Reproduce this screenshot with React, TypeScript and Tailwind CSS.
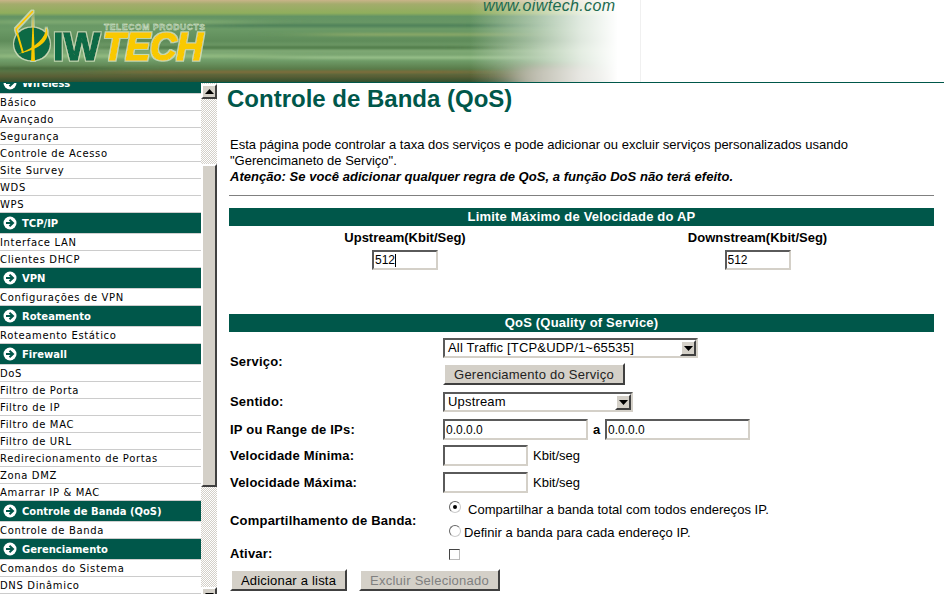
import type { ReactNode } from 'react';

const menu = [
  { title: 'Wireless', items: ['Básico', 'Avançado', 'Segurança', 'Controle de Acesso', 'Site Survey', 'WDS', 'WPS'] },
  { title: 'TCP/IP', items: ['Interface LAN', 'Clientes DHCP'] },
  { title: 'VPN', items: ['Configurações de VPN'] },
  { title: 'Roteamento', items: ['Roteamento Estático'] },
  {
    title: 'Firewall',
    items: ['DoS', 'Filtro de Porta', 'Filtro de IP', 'Filtro de MAC', 'Filtro de URL', 'Redirecionamento de Portas', 'Zona DMZ', 'Amarrar IP & MAC'],
  },
  { title: 'Controle de Banda (QoS)', items: ['Controle de Banda'] },
  { title: 'Gerenciamento', items: ['Comandos do Sistema', 'DNS Dinâmico'] },
];

const inset =
  'border-2 border-t-[#5a5a5a] border-l-[#5a5a5a] border-r-[#d4d0c8] border-b-[#d4d0c8] bg-white';
const raised =
  'bg-[#d4d0c8] border-2 border-t-white border-l-white border-r-[#404040] border-b-[#404040]';

function Banner() {
  return (
    <svg width="641" height="82" viewBox="0 0 641 82" className="block">
      <defs>
        <linearGradient id="bands" x1="0" y1="0" x2="0" y2="1">
          <stop offset="0" stopColor="#c9b489" />
          <stop offset="0.05" stopColor="#a3ac6c" />
          <stop offset="0.16" stopColor="#8fae5c" />
          <stop offset="0.2" stopColor="#649464" />
          <stop offset="0.36" stopColor="#6b9a66" />
          <stop offset="0.5" stopColor="#5f8c5a" />
          <stop offset="0.62" stopColor="#7ea874" />
          <stop offset="0.74" stopColor="#6f9c68" />
          <stop offset="0.84" stopColor="#5a7c4a" />
          <stop offset="0.93" stopColor="#5a5f36" />
          <stop offset="1" stopColor="#33502e" />
        </linearGradient>
        <linearGradient id="fade" x1="0" y1="0" x2="1" y2="0">
          <stop offset="0" stopColor="#fff" stopOpacity="0" />
          <stop offset="0.4" stopColor="#fff" stopOpacity="0.4" />
          <stop offset="0.75" stopColor="#fff" stopOpacity="0.8" />
          <stop offset="1" stopColor="#fff" stopOpacity="1" />
        </linearGradient>
        <filter id="streak" filterUnits="userSpaceOnUse" x="-150" y="-20" width="941" height="122">
          <feGaussianBlur stdDeviation="30 1" />
        </filter>
        <filter id="blob" filterUnits="userSpaceOnUse" x="400" y="40" width="241" height="60">
          <feGaussianBlur stdDeviation="12 3" />
        </filter>
        <filter id="glow" x="-10%" y="-10%" width="120%" height="120%">
          <feMorphology in="SourceAlpha" operator="dilate" radius="1" result="fat" />
          <feFlood floodColor="#d8e8c8" floodOpacity="0.75" />
          <feComposite in2="fat" operator="in" result="edge" />
          <feMerge>
            <feMergeNode in="edge" />
            <feMergeNode in="SourceGraphic" />
          </feMerge>
        </filter>
      </defs>
      <rect width="641" height="82" fill="url(#bands)" />
      <g filter="url(#streak)">
        <rect x="-20" y="20" width="260" height="4" fill="#7ba76f" />
        <rect x="200" y="24" width="320" height="3" fill="#4e8058" />
        <rect x="320" y="33" width="190" height="3" fill="#8aa868" />
        <rect x="100" y="46" width="400" height="3" fill="#507a48" />
        <rect x="-30" y="54" width="300" height="4" fill="#8fb87f" />
        <rect x="280" y="56" width="240" height="3" fill="#98c08a" />
        <rect x="120" y="71" width="360" height="2" fill="#8a6a38" />
        <rect x="-30" y="67" width="140" height="3" fill="#4a6a3c" />
      </g>
      <rect x="515" y="66" width="85" height="22" rx="10" fill="#8c8a72" filter="url(#blob)" />
      <rect x="470" y="0" width="148" height="82" fill="url(#fade)" />
      <rect x="617" y="0" width="24" height="82" fill="#fff" />
      <rect x="640" y="0" width="1" height="82" fill="#f0f0f0" />
      <text x="483" y="11" fontFamily="'Liberation Sans', sans-serif" fontStyle="italic" fontSize="16" fill="#1c6a50" textLength="132">
        www.oiwtech.com
      </text>

      {/* logo */}
      <g filter="url(#glow)">
        <ellipse cx="32" cy="44" rx="18" ry="16.5" fill="#0a6a45" />
        <path d="M33 11 L16 29 L23 53" fill="none" stroke="#f7c800" strokeWidth="2" />
        <path d="M33 10 L35 61 L31 61 Z" fill="#f7c800" />
        <path d="M46 27 C51 36 46 48 18 54 C36 47 46 38 46 27 Z" fill="#f7c800" />
        <text x="53" y="60" fontFamily="'Liberation Sans', sans-serif" fontWeight="700" fontSize="39" fill="#0a6a45" stroke="#0a6a45" strokeWidth="1.4" textLength="47" lengthAdjust="spacingAndGlyphs">
          IW
        </text>
        <text x="103" y="60" fontFamily="'Liberation Sans', sans-serif" fontWeight="700" fontStyle="italic" fontSize="39" fill="#f9c900" stroke="#f9c900" strokeWidth="1.4" textLength="100" lengthAdjust="spacingAndGlyphs">
          TECH
        </text>
      </g>
      <text x="104" y="29.5" fontFamily="'Liberation Sans', sans-serif" fontWeight="700" fontSize="8.5" fill="#7aa680" stroke="#e6efd8" strokeWidth="0.4" textLength="101">
        TELECOM PRODUCTS
      </text>
    </svg>
  );
}

function MenuArrow() {
  return (
    <svg width="14" height="14" viewBox="0 0 14 14" className="shrink-0">
      <circle cx="7" cy="7" r="6.5" fill="#fff" />
      <path d="M3 7 H9 M6.5 3.8 L10 7 L6.5 10.2" fill="none" stroke="#00574a" strokeWidth="2" />
    </svg>
  );
}

function Sidebar() {
  return (
    <div className="w-[201px] shrink-0 h-full overflow-hidden font-['DejaVu_Sans',Verdana,sans-serif]">
      <div className="-mt-[10px]">
        {menu.map((group) => (
          <div key={group.title}>
            <div className="h-[21px] bg-[#00574a] border-b border-[#d0d0d0] flex items-center gap-[5px] pl-[3px] text-white text-[10px] font-bold">
              <MenuArrow />
              <span>{group.title}</span>
            </div>
            {group.items.map((item) => (
              <div key={item} className="h-[17px] border-b border-[#cccccc] text-[10px] leading-[18px] tracking-[0.65px] text-black bg-white">
                {item}
              </div>
            ))}
          </div>
        ))}
      </div>
    </div>
  );
}

function Triangle({ down }: { down?: boolean }) {
  return (
    <svg width="9" height="5" viewBox="0 0 9 5">
      <path d={down ? 'M0 0 H9 L4.5 5 Z' : 'M0 5 H9 L4.5 0 Z'} fill="#000" />
    </svg>
  );
}

function ScrollBar() {
  return (
    <div className="w-[16px] shrink-0 h-full flex flex-col pt-px bg-[repeating-conic-gradient(#d4d0c8_0_25%,#ffffff_0_50%)] bg-[length:2px_2px]">
      <div className={`h-[15px] w-[16px] shrink-0 flex items-center justify-center ${raised}`}>
        <Triangle />
      </div>
      <div className={`h-[323px] w-[16px] mt-[65px] shrink-0 ${raised}`} />
      <div className={`h-[16px] w-[16px] mt-[100px] shrink-0 flex items-center justify-center ${raised}`}>
        <Triangle down />
      </div>
    </div>
  );
}

function TextBox({ value, className }: { value?: string; className: string }) {
  return (
    <input
      readOnly
      value={value ?? ''}
      className={`block ${inset} px-px text-[12px] text-black outline-none ${className}`}
    />
  );
}

function SelectBox({ value, className }: { value: string; className: string }) {
  return (
    <div className={`${inset} h-[20px] flex items-center justify-between pl-[3px] text-[13px] tracking-[0.18px] ${className}`}>
      <span>{value}</span>
      <div className={`h-[16px] w-[16px] flex items-center justify-center ${raised}`}>
        <Triangle down />
      </div>
    </div>
  );
}

function Band({ children, className }: { children: ReactNode; className: string }) {
  return (
    <div className={`h-[18px] bg-[#00574a] text-white text-[13px] font-bold leading-[18px] text-center tracking-[0.2px] ${className}`}>
      {children}
    </div>
  );
}

function Row({ label, className, children }: { label: string; className: string; children: ReactNode }) {
  return (
    <div className={`flex items-center ${className}`}>
      <div className="w-[214px] shrink-0 pl-px text-[13px] font-bold tracking-[0.2px]">{label}</div>
      <div className="flex-1">{children}</div>
    </div>
  );
}

function Radio({ checked, className }: { checked?: boolean; className: string }) {
  return (
    <span className={`w-[12px] h-[12px] shrink-0 rounded-full border border-t-[#666] border-l-[#666] border-r-[#ccc] border-b-[#ccc] bg-white flex items-center justify-center ${className}`}>
      {checked && <span className="w-[4px] h-[4px] rounded-full bg-black" />}
    </span>
  );
}

function Content() {
  return (
    <div className="flex-1 min-w-0 pl-[12px] pr-[10px] text-black font-['Liberation_Sans',Arial,sans-serif]">
      <h1 className="-ml-[2px] mt-[2px] text-[24px] leading-[28px] font-bold text-[#00574a]">
        Controle de Banda (QoS)
      </h1>
      <div className="mt-[24px] pl-px text-[13px] leading-[16px]">
        <p>Esta página pode controlar a taxa dos serviços e pode adicionar ou excluir serviços personalizados usando</p>
        <p>"Gerencimaneto de Serviço".</p>
        <p className="font-bold italic tracking-[0.04px]">Atenção: Se você adicionar qualquer regra de QoS, a função DoS não terá efeito.</p>
      </div>
      <div className="mt-[10px] h-px bg-[#808080]" />
      <Band className="mt-[12px]">Limite Máximo de Velocidade do AP</Band>
      <div className="flex">
        <div className="w-[352px] flex flex-col items-center pt-[5px]">
          <div className="text-[13px] leading-[14px] font-bold">Upstream(Kbit/Seg)</div>
          <div className="relative mt-[5px]">
            <TextBox value="512" className="w-[66px] h-[20px]" />
            <span className="absolute left-[23px] top-[4px] w-px h-[13px] bg-black" />
          </div>
        </div>
        <div className="w-[353px] flex flex-col items-center pt-[5px]">
          <div className="text-[13px] leading-[14px] font-bold">Downstream(Kbit/Seg)</div>
          <TextBox value="512" className="mt-[5px] w-[66px] h-[20px]" />
        </div>
      </div>
      <Band className="mt-[44px]">QoS (Quality of Service)</Band>

      <Row label="Serviço:" className="mt-[6px] h-[47px]">
        <SelectBox value="All Traffic [TCP&UDP/1~65535]" className="w-[255px]" />
        <button className={`block mt-[5px] h-[22px] w-[182px] text-[13px] tracking-[0.25px] text-[#222] ${raised}`}>Gerenciamento do Serviço</button>
      </Row>
      <Row label="Sentido:" className="mt-[7px] h-[20px]">
        <SelectBox value="Upstream" className="w-[190px]" />
      </Row>
      <Row label="IP ou Range de IPs:" className="mt-[7px] h-[21px]">
        <div className="flex items-center">
          <TextBox value="0.0.0.0" className="w-[145px] h-[21px]" />
          <span className="w-[17px] text-center text-[13px] font-bold">a</span>
          <TextBox value="0.0.0.0" className="w-[145px] h-[21px]" />
        </div>
      </Row>
      <Row label="Velocidade Mínima:" className="mt-[5px] h-[21px]">
        <div className="flex items-center gap-[5px] text-[13px]">
          <TextBox className="w-[85px] h-[21px]" />
          <span>Kbit/seg</span>
        </div>
      </Row>
      <Row label="Velocidade Máxima:" className="mt-[6px] h-[21px]">
        <div className="flex items-center gap-[5px] text-[13px]">
          <TextBox className="w-[85px] h-[21px]" />
          <span>Kbit/seg</span>
        </div>
      </Row>
      <Row label="Compartilhamento de Banda:" className="mt-[6px] h-[44px]">
        <div className="flex flex-col text-[13px] leading-[16px] tracking-[0.04px]">
          <div className="flex items-start gap-[7px] pl-[6px] h-[22px]">
            <Radio checked className="mt-[2px]" />
            <span className="mt-[3px]">Compartilhar a banda total com todos endereços IP.</span>
          </div>
          <div className="flex items-start gap-[3px] pl-[6px] h-[22px]">
            <Radio className="mt-[4px]" />
            <span className="mt-[4px]">Definir a banda para cada endereço IP.</span>
          </div>
        </div>
      </Row>
      <Row label="Ativar:" className="mt-[3px] h-[16px]">
        <div className="ml-[6px] w-[11px] h-[11px] border border-t-[#444] border-l-[#444] border-r-[#bbb] border-b-[#bbb] bg-white" />
      </Row>
      <div className="mt-[7px] pl-px flex gap-[12px]">
        <button className={`h-[22px] w-[117px] text-[13px] tracking-[0.2px] ${raised}`}>Adicionar a lista</button>
        <button className={`h-[22px] w-[141px] text-[13px] tracking-[0.25px] text-[#808080] ${raised}`}>Excluir Selecionado</button>
      </div>
    </div>
  );
}

export default function App() {
  return (
    <div className="w-[944px] h-[594px] overflow-hidden bg-white flex flex-col">
      <div className="h-[83px] shrink-0 border-b border-[#00574a]">
        <Banner />
      </div>
      <div className="flex-1 min-h-0 flex">
        <Sidebar />
        <ScrollBar />
        <Content />
      </div>
    </div>
  );
}
